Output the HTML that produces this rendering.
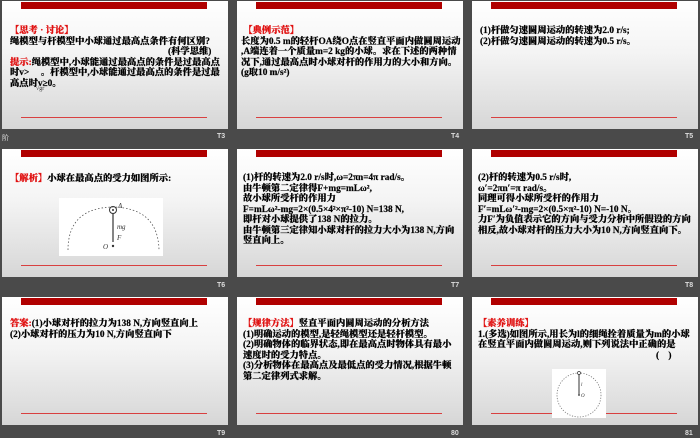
<!DOCTYPE html>
<html><head><meta charset="utf-8"><style>
*{margin:0;padding:0;box-sizing:border-box}
body{width:700px;height:438px;background:#4a4a4a;position:relative;overflow:hidden;font-family:"Liberation Serif","Noto Serif CJK SC",serif}
.s{position:absolute;width:226px;height:128px;background:linear-gradient(#ffffff 0%,#f4f4f4 40%,#d6d6d6 100%)}
.s .bar{position:absolute;left:19px;width:186px;top:1px;height:7px;background:#b00000}
.s .ln{position:absolute;left:19px;width:186px;top:116px;height:1px;background:#d84040}
.t{position:absolute;left:8px;right:6px;font-size:9.3px;line-height:10.5px;font-weight:900;color:#000;white-space:nowrap;-webkit-text-stroke:0.2px #000}
.r{color:#e01010;-webkit-text-stroke:0.2px #e01010}
.lab{position:absolute;font-size:7px;color:#ddd;font-family:"Liberation Sans",sans-serif;font-weight:bold}
.box{position:absolute;background:#fff}
</style></head><body>

<div class="s" style="left:2px;top:1px"><div class="bar"></div><div class="ln"></div>
<div class="t" style="top:25px"><span class="r">【思考 · 讨论】</span><br>绳模型与杆模型中小球通过最高点条件有何区别?<br><span style="padding-left:158px">(科学思维)</span><br><span class="r">提示:</span>绳模型中,小球能通过最高点的条件是过最高点<br>时v&gt;&nbsp;&nbsp;&nbsp;&nbsp;&nbsp;。杆模型中,小球能通过最高点的条件是过最<br>高点时v≥0。</div>
<div style="position:absolute;left:34px;top:85px;font-size:6px;color:#333">√gr</div>
</div>
<div class="s" style="left:237px;top:1px"><div class="bar"></div><div class="ln"></div>
<div class="t" style="left:4px;top:25px"><span class="r">&nbsp;【典例示范】</span><br>长度为0.5 m的轻杆OA绕O点在竖直平面内做圆周运动<br>,A端连着一个质量m=2 kg的小球。求在下述的两种情<br>况下,通过最高点时小球对杆的作用力的大小和方向。<br>(g取10 m/s²)</div>
</div>
<div class="s" style="left:472px;top:1px"><div class="bar"></div><div class="ln"></div>
<div class="t" style="left:8px;top:25px">(1)杆做匀速圆周运动的转速为2.0 r/s;<br>(2)杆做匀速圆周运动的转速为0.5 r/s。</div>
</div>
<div class="lab" style="left:2px;top:133px;font-weight:normal">阶</div>
<div class="lab" style="left:217px;top:133px">T3</div>
<div class="lab" style="left:451px;top:133px">T4</div>
<div class="lab" style="left:685px;top:133px">T5</div>

<div class="s" style="left:2px;top:149px"><div class="bar"></div><div class="ln"></div>
<div class="t" style="top:25px"><span class="r">【解析】</span>小球在最高点的受力如图所示:</div>
<div class="box" style="left:57px;top:49px;width:104px;height:58px">
<svg width="104" height="58"><path d="M9 52 Q9 10 54 9 Q99 10 100 52" fill="none" stroke="#555" stroke-dasharray="1.5 2" stroke-width="0.8"/>
<circle cx="54" cy="12" r="3.5" fill="none" stroke="#333"/><circle cx="54" cy="12" r="1" fill="#333"/>
<line x1="54" y1="15" x2="54" y2="44" stroke="#333" stroke-width="1.2"/><circle cx="54" cy="48" r="1.2" fill="#333"/>
<text x="59" y="10" font-size="7" font-style="italic" fill="#333">A</text>
<text x="58" y="31" font-size="7" font-style="italic" fill="#333">mg</text>
<text x="58" y="42" font-size="7" font-style="italic" fill="#333">F</text>
<text x="44" y="51" font-size="7" font-style="italic" fill="#333">O</text></svg></div>
</div>
<div class="s" style="left:237px;top:149px"><div class="bar"></div><div class="ln"></div>
<div class="t" style="left:6px;top:24px">(1)杆的转速为2.0 r/s时,ω=2πn=4π rad/s。<br>由牛顿第二定律得F+mg=mLω²,<br>故小球所受杆的作用力<br>F=mLω²-mg=2×(0.5×4²×π²-10) N=138 N,<br>即杆对小球提供了138 N的拉力。<br>由牛顿第三定律知小球对杆的拉力大小为138 N,方向<br>竖直向上。</div>
</div>
<div class="s" style="left:472px;top:149px"><div class="bar"></div><div class="ln"></div>
<div class="t" style="left:6px;top:24px">(2)杆的转速为0.5 r/s时,<br>ω′=2πn′=π rad/s。<br>同理可得小球所受杆的作用力<br>F′=mLω′²-mg=2×(0.5×π²-10) N=-10 N。<br>力F′为负值表示它的方向与受力分析中所假设的方向<br>相反,故小球对杆的压力大小为10 N,方向竖直向下。</div>
</div>
<div class="lab" style="left:217px;top:282px">T6</div>
<div class="lab" style="left:451px;top:282px">T7</div>
<div class="lab" style="left:685px;top:282px">T8</div>

<div class="s" style="left:2px;top:297px"><div class="bar"></div><div class="ln"></div>
<div class="t" style="top:22px"><span class="r">答案:</span>(1)小球对杆的拉力为138 N,方向竖直向上<br>(2)小球对杆的压力为10 N,方向竖直向下</div>
</div>
<div class="s" style="left:237px;top:297px"><div class="bar"></div><div class="ln"></div>
<div class="t" style="left:6px;top:22px"><span class="r">【规律方法】</span>竖直平面内圆周运动的分析方法<br>(1)明确运动的模型,是轻绳模型还是轻杆模型。<br>(2)明确物体的临界状态,即在最高点时物体具有最小<br>速度时的受力特点。<br>(3)分析物体在最高点及最低点的受力情况,根据牛顿<br>第二定律列式求解。</div>
</div>
<div class="s" style="left:472px;top:297px"><div class="bar"></div><div class="ln"></div>
<div class="t" style="left:6px;top:22px"><span class="r">【素养训练】</span><br>1.(多选)如图所示,用长为l的细绳拴着质量为m的小球<br>在竖直平面内做圆周运动,则下列说法中正确的是<br><span style="padding-left:178px">(&nbsp;&nbsp;&nbsp;&nbsp;)</span></div>
<div class="box" style="left:80px;top:72px;width:54px;height:49px">
<svg width="54" height="49"><circle cx="27" cy="26" r="22" fill="none" stroke="#777" stroke-dasharray="1.2 1.5" stroke-width="0.8"/>
<circle cx="27" cy="4" r="1.5" fill="#fff" stroke="#333" stroke-width="0.7"/>
<line x1="27" y1="5.5" x2="27" y2="26" stroke="#333" stroke-width="1"/><circle cx="27" cy="26" r="0.9" fill="#333"/>
<text x="29" y="17" font-size="5" font-style="italic" fill="#333">l</text><text x="29" y="28" font-size="5" font-style="italic" fill="#333">O</text></svg></div>
</div>
<div class="lab" style="left:217px;top:430px">T9</div>
<div class="lab" style="left:451px;top:430px">80</div>
<div class="lab" style="left:685px;top:430px">81</div>
</body></html>
